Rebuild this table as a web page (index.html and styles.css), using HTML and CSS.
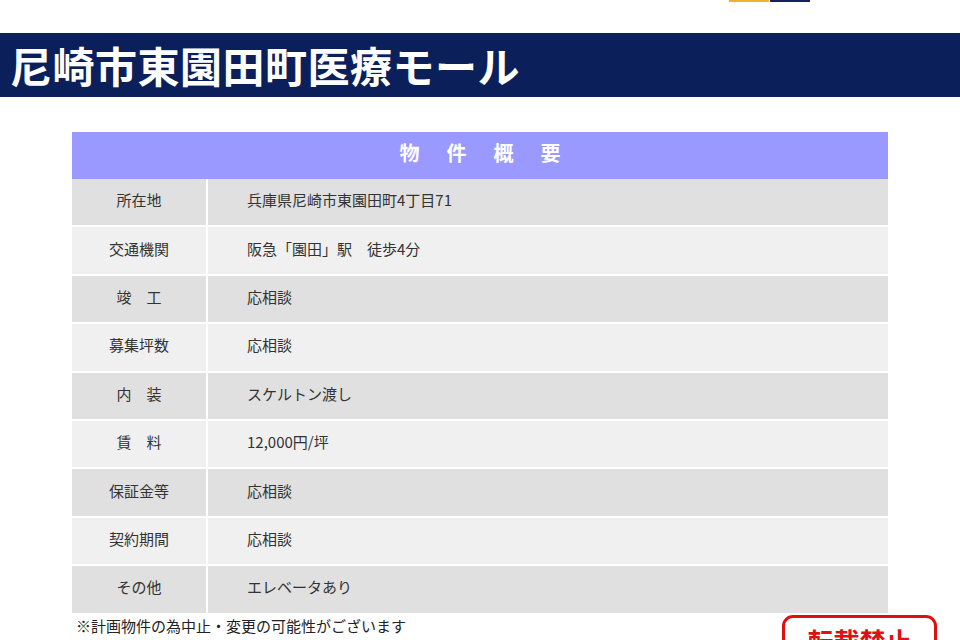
FILE: index.html
```html
<!DOCTYPE html>
<html lang="ja">
<head>
<meta charset="utf-8">
<title>尼崎市東園田町医療モール</title>
<link rel="stylesheet" href="styles.css">
</head>
<body>
<div class="topbar"><span class="tb tb-yellow"></span><span class="tb tb-navy"></span></div>
<header class="band"><h1 class="title">尼崎市東園田町医療モール</h1></header>
<main class="content">
  <div class="table">
    <div class="thead">物件概要</div>
    <div class="row dark"><div class="lab">所在地</div><div class="val">兵庫県尼崎市東園田町4丁目71</div></div>
    <div class="row light"><div class="lab">交通機関</div><div class="val">阪急「園田」駅　徒歩4分</div></div>
    <div class="row dark"><div class="lab">竣　工</div><div class="val">応相談</div></div>
    <div class="row light"><div class="lab">募集坪数</div><div class="val">応相談</div></div>
    <div class="row dark"><div class="lab">内　装</div><div class="val">スケルトン渡し</div></div>
    <div class="row light"><div class="lab">賃　料</div><div class="val">12,000円/坪</div></div>
    <div class="row dark"><div class="lab">保証金等</div><div class="val">応相談</div></div>
    <div class="row light"><div class="lab">契約期間</div><div class="val">応相談</div></div>
    <div class="row dark"><div class="lab">その他</div><div class="val">エレベータあり</div></div>
  </div>
  <div class="foot">
    <p class="note">※計画物件の為中止・変更の可能性がございます</p>
    <div class="stamp">転載禁止</div>
  </div>
</main>
</body>
</html>
```

FILE: styles.css
```css
html, body {
  margin: 0;
  padding: 0;
  background: #ffffff;
  font-family: "Noto Sans CJK JP", "Noto Sans", sans-serif;
  color: #222;
  overflow: hidden;
}
.topbar {
  display: flex;
  height: 33px;
  padding-left: 729px;
  align-items: flex-start;
}
.tb {
  display: block;
  width: 40px;
  height: 2px;
}
.tb-yellow { background: #f0b12e; margin-right: 1px; }
.tb-navy { background: #14215e; }
.band {
  background: #0b1f5b;
  height: 64px;
  display: flex;
  align-items: center;
}
.title {
  margin: 0 0 0 10px;
  color: #ffffff;
  font-size: 42px;
  font-weight: 700;
  line-height: 1;
  letter-spacing: 0.5px;
}
.content {
  padding: 35px 0 0 72px;
  width: 816px;
}
.table {
  display: flex;
  flex-direction: column;
  gap: 2px;
  background: #ffffff;
}
.thead {
  height: 47px;
  margin-bottom: -2px;
  background: #9999ff;
  color: #ffffff;
  font-weight: 700;
  font-size: 20px;
  letter-spacing: 27px;
  padding-left: 27px;
  padding-bottom: 6px;
  box-sizing: border-box;
  display: flex;
  align-items: center;
  justify-content: center;
}
.row {
  display: grid;
  grid-template-columns: 134px 1fr;
  column-gap: 2px;
  height: 46.4px;
  font-size: 15px;
  color: #333;
}
.row > div {
  display: flex;
  align-items: center;
  padding-bottom: 5px;
  box-sizing: border-box;
}
.dark > div { background: #e0e0e0; }
.light > div { background: #f0f0f0; }
.lab { justify-content: center; }
.val { padding-left: 39px; }
.foot {
  display: flex;
  justify-content: space-between;
  align-items: flex-start;
}
.note {
  margin: 3px 0 0 4px;
  font-size: 15px;
  line-height: 20px;
  color: #222;
}
.stamp {
  margin: 2px -49px 0 0;
  width: 155px;
  height: 50px;
  border: 3px solid #dd1111;
  border-radius: 11px;
  color: #dd1111;
  font-size: 26px;
  font-weight: 700;
  text-align: center;
  line-height: 1;
  padding-top: 10px;
  box-sizing: border-box;
}
```
